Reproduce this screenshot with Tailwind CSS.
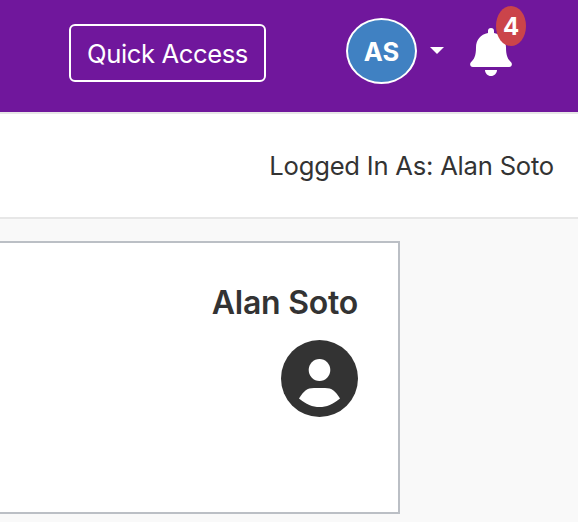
<!DOCTYPE html>
<html lang="en">
<head>
<meta charset="utf-8">
<title>Dashboard</title>
<script src="https://cdn.jsdelivr.net/npm/@tailwindcss/browser@4"></script>
</head>
<body class="h-[522px] w-[578px] overflow-hidden bg-[#f9f9f9] font-['Inter',sans-serif] text-[#333333]">
<header class="flex h-[114px] items-start border-b-2 border-[#e7e7e7] bg-[#70179c] pl-[69px] text-white">
  <button class="mt-6 flex h-[58px] w-[197px] items-center justify-center rounded-md border-2 border-white pt-0.5 text-[25.6px] tracking-[-0.4px] whitespace-nowrap"><span>Quick Access</span></button>
  <div class="mt-[18px] ml-20 flex h-[66px] w-[71px] shrink-0 items-center justify-center rounded-[50%] border-2 border-white bg-[#4081c2] pt-0.5 text-[25.5px] font-bold"><span>AS</span></div>
  <svg class="mt-[47px] ml-[13px] h-[7px] w-[14px] shrink-0" viewBox="0 0 14 7" fill="white"><path d="M0 0H14L7 7Z"/></svg>
  <div class="relative mt-7 ml-[26px] h-12 w-[42px] shrink-0">
    <svg class="h-12 w-[42px]" viewBox="0 0 42 48" fill="white"><path d="M18 5V3a3 3 0 0 1 6 0v2C31.500 6.500 36 12 36 19.500C36 28 38 31.500 41.300 34.500C42.700 36.500 41.500 39 39.200 39H2.800C.5 39-.7 36.500.7 34.500C4 31.500 6 28 6 19.500C6 12 10.500 6.500 18 5ZM15 42H27C27 45.300 24.300 48 21 48S15 45.300 15 42Z"/></svg>
    <span class="absolute top-[-22px] left-[26px] flex h-10 w-[30px] items-center justify-center rounded-[50%] bg-[#cb444a] pt-0.5 text-[24px] font-bold">4</span>
  </div>
</header>
<div class="flex h-[105px] items-center justify-end border-b-2 border-[#e7e7e7] bg-white pt-0.5 pr-6 text-[25.6px] tracking-[-0.22px]"><span>Logged In As: Alan Soto</span></div>
<main class="pt-[22px]">
  <section class="flex h-[273px] w-[400px] flex-col items-end border-y-2 border-r-2 border-[#bbbfc5] bg-white pt-10 pr-10">
    <h1 class="text-[32px] leading-[40px] font-semibold tracking-[-0.25px] whitespace-nowrap">Alan Soto</h1>
    <svg class="mt-[17px] h-[77px] w-[77px]" viewBox="0 0 77 77"><circle cx="38.500" cy="38.500" r="38.500" fill="#333"/><ellipse cx="38.500" cy="30" rx="10.800" ry="11" fill="white"/><path d="M18 58.500C22.500 51 26 48 33 48H44C51 48 54.500 51 59 58.500C52 64.500 45.500 67 38.500 67S25 64.500 18 58.500Z" fill="white"/></svg>
  </section>
</main>
</body>
</html>
